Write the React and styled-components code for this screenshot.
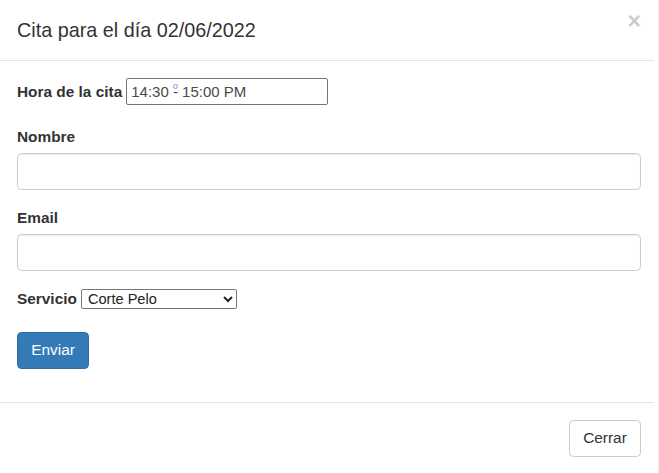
import React from "react";
import styled, { createGlobalStyle } from "styled-components";

const Global = createGlobalStyle`
  html, body { margin: 0; padding: 0; background: #fff; }
  body {
    font-family: "Liberation Sans", Arial, Helvetica, sans-serif;
    color: #333;
    font-size: 15.4px;
    line-height: 22px;
  }
  * { box-sizing: border-box; }
`;

const Modal = styled.div`
  width: 659px;
  background: #fff;
  border-right: 1px solid rgba(0, 0, 0, 0.05);
`;

const Header = styled.div`
  height: 61px;
  margin-right: 4px;
  padding: 0 13px 0 17px;
  border-bottom: 1px solid #e5e5e5;
  display: flex;
  justify-content: space-between;
  align-items: center;
`;

const Title = styled.h4`
  margin: 0;
  font-size: 19.8px;
  font-weight: 400;
  line-height: 28px;
  color: #333;
`;

const Close = styled.button`
  align-self: flex-start;
  margin-top: 10px;
  padding: 0;
  border: 0;
  background: transparent;
  font-family: "Liberation Sans", Arial, sans-serif;
  font-size: 23px;
  font-weight: 700;
  line-height: 1;
  color: #000;
  opacity: 0.2;
  cursor: pointer;
`;

const Body = styled.div`
  padding: 17px 17px 33px 17px;
`;

const InlineRow = styled.div`
  display: flex;
  align-items: center;
  gap: 4px;
  height: ${(p) => p.$h}px;
  margin-bottom: ${(p) => p.$mb}px;
`;

const Label = styled.label`
  display: block;
  font-weight: 700;
  line-height: 22px;
  margin-bottom: ${(p) => (p.$inline ? 0 : 5.5)}px;
`;

const Group = styled.div`
  margin-bottom: 16.5px;
`;

const TimeBox = styled.div`
  width: 202px;
  height: 27px;
  border: 1px solid #767676;
  border-radius: 2px;
  padding: 0 4px;
  font-size: 15px;
  line-height: 25px;
  color: #4a4a4a;
  white-space: pre;
`;

const Dash = styled.span`
  position: relative;
`;

const Ring = styled.span`
  position: absolute;
  left: 0;
  top: 1px;
  width: 5px;
  height: 5px;
  border: 1px solid #8f8fd0;
  border-radius: 50%;
`;

const TextInput = styled.input`
  display: block;
  width: 100%;
  height: 37px;
  border: 1px solid #ccc;
  border-radius: 4.4px;
  box-shadow: inset 0 1px 1px rgba(0, 0, 0, 0.075);
  padding: 6px 13px;
  font: inherit;
  color: #555;
  outline: none;
`;

const Select = styled.select`
  width: 156px;
  height: 20px;
  border: 1px solid #767676;
  border-radius: 2px;
  padding: 0 0 0 2px;
  font-family: "Liberation Sans", Arial, sans-serif;
  font-size: 14.6px;
  color: #222;
  background: #fff;
`;

const Button = styled.button`
  display: inline-flex;
  align-items: center;
  justify-content: center;
  width: 72px;
  height: 37px;
  padding: 0;
  border-radius: 4.4px;
  font-family: "Liberation Sans", Arial, sans-serif;
  font-size: 15.4px;
  cursor: pointer;
  color: ${(p) => (p.$primary ? "#fff" : "#333")};
  background: ${(p) => (p.$primary ? "#337ab7" : "#fff")};
  border: 1px solid ${(p) => (p.$primary ? "#2e6da4" : "#ccc")};
`;

const Footer = styled.div`
  margin-right: 4px;
  border-top: 1px solid #e5e5e5;
  padding: 17px 13px 17px 17px;
  display: flex;
  justify-content: flex-end;
`;

export default function App() {
  return (
    <>
      <Global />
      <Modal>
        <Header>
          <Title>Cita para el día 02/06/2022</Title>
          <Close aria-label="Close">×</Close>
        </Header>
        <Body>
          <InlineRow $h={27} $mb={20.5}>
            <Label $inline>Hora de la cita</Label>
            <TimeBox>
              {"14:30 "}
              <Dash>
                -<Ring />
              </Dash>
              {" 15:00 PM"}
            </TimeBox>
          </InlineRow>
          <Group>
            <Label>Nombre</Label>
            <TextInput type="text" />
          </Group>
          <Group>
            <Label>Email</Label>
            <TextInput type="email" />
          </Group>
          <InlineRow $h={22} $mb={22}>
            <Label $inline>Servicio</Label>
            <Select defaultValue="Corte Pelo">
              <option>Corte Pelo</option>
              <option>Tinte</option>
              <option>Peinado</option>
            </Select>
          </InlineRow>
          <Button $primary>Enviar</Button>
        </Body>
        <Footer>
          <Button>Cerrar</Button>
        </Footer>
      </Modal>
    </>
  );
}
